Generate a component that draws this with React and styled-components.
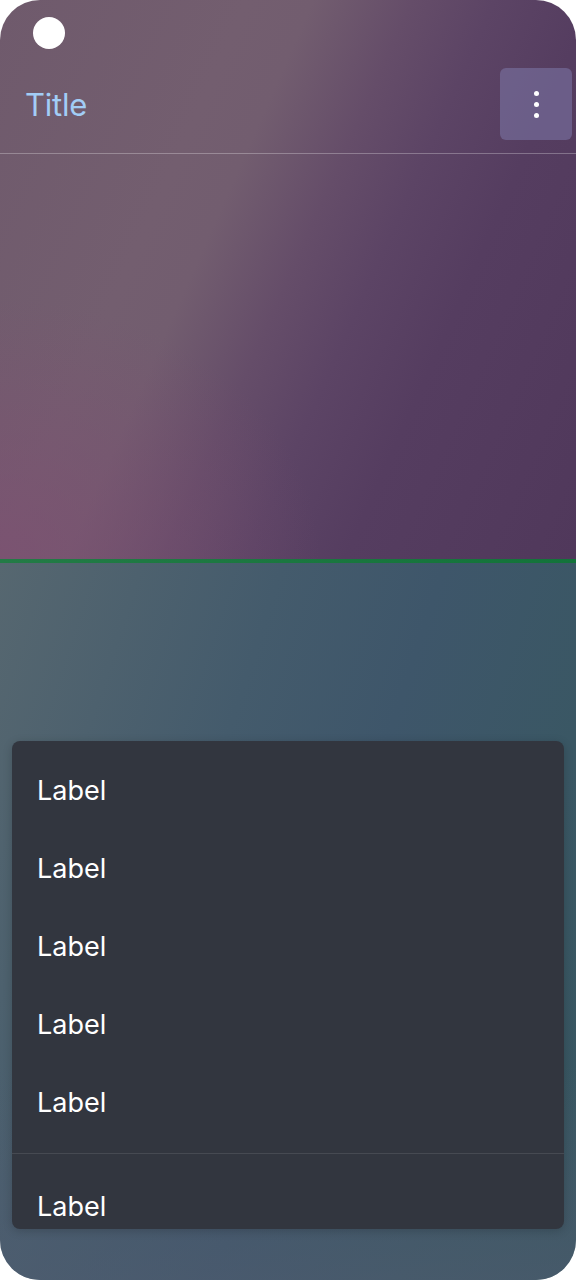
import React from "react";
import styled, { createGlobalStyle } from "styled-components";

const GlobalStyle = createGlobalStyle`
  html, body {
    margin: 0;
    padding: 0;
    background: #ffffff;
    font-family: Inter, "Noto Sans", sans-serif;
  }
`;

const Frame = styled.div`
  width: 576px;
  height: 1280px;
  border-radius: 40px;
  overflow: hidden;
  display: flex;
  flex-direction: column;
`;

const TopPane = styled.section`
  height: 559px;
  background:
    radial-gradient(ellipse 320px 260px at 0% 100%, rgba(126, 78, 114, 0.7), rgba(126, 78, 114, 0) 100%),
    linear-gradient(114deg, #6f5a6c 0%, #735e6f 30%, #725d6f 38%, #654d69 50%, #5c4465 60%, #553d60 72%, #50385b 100%);
`;

const Header = styled.header`
  padding: 17px 4px 13px 25px;
  border-bottom: 1px solid rgba(255, 255, 255, 0.28);
`;

const StatusRow = styled.div`
  height: 32px;
  display: flex;
  align-items: center;
  padding-left: 8px;
`;

const Camera = styled.span`
  width: 32px;
  height: 32px;
  border-radius: 50%;
  background: #ffffff;
`;

const AppBar = styled.div`
  margin-top: 19px;
  height: 72px;
  display: flex;
  align-items: center;
  justify-content: space-between;
`;

const Title = styled.h1`
  margin: 0;
  font-size: 31px;
  font-weight: 400;
  color: #a2cdf6;
  letter-spacing: -0.2px;
`;

const MenuButton = styled.button`
  width: 72px;
  height: 72px;
  border: none;
  border-radius: 6px;
  background: rgba(125, 120, 170, 0.55);
  display: flex;
  flex-direction: column;
  align-items: center;
  justify-content: center;
  gap: 6px;
  padding: 0;
`;

const Dot = styled.span`
  width: 5px;
  height: 5px;
  border-radius: 50%;
  background: #ffffff;
`;

const GreenRule = styled.div`
  height: 4px;
  background: linear-gradient(90deg, #237b46, #13733a);
`;

const BottomPane = styled.section`
  flex: 1;
  padding: 178px 12px 0;
  background:
    linear-gradient(180deg, rgba(0, 0, 0, 0) 70%, rgba(80, 92, 112, 0.6) 100%),
    linear-gradient(108deg, #566770 0%, #445b6c 35%, #3e566a 55%, #3a5764 78%, #375660 100%);
`;

const Menu = styled.div`
  height: 488px;
  overflow: hidden;
  background: #32363f;
  border-radius: 8px;
  box-shadow: 0 2px 10px rgba(0, 0, 0, 0.18);
  padding-top: 10px;
  box-sizing: border-box;
`;

const Item = styled.div`
  height: 78px;
  display: flex;
  align-items: center;
  padding-left: 25px;
  font-size: 27px;
  color: #ffffff;
`;

const Separator = styled.hr`
  margin: 12px 0 13px;
  border: none;
  height: 1px;
  background: rgba(255, 255, 255, 0.1);
`;

const labels = ["Label", "Label", "Label", "Label", "Label"];

export default function App() {
  return (
    <>
      <GlobalStyle />
      <Frame>
        <TopPane>
          <Header>
            <StatusRow>
              <Camera />
            </StatusRow>
            <AppBar>
              <Title>Title</Title>
              <MenuButton aria-label="More">
                <Dot />
                <Dot />
                <Dot />
              </MenuButton>
            </AppBar>
          </Header>
        </TopPane>
        <GreenRule />
        <BottomPane>
          <Menu>
            {labels.map((l, i) => (
              <Item key={i}>{l}</Item>
            ))}
            <Separator />
            <Item>Label</Item>
          </Menu>
        </BottomPane>
      </Frame>
    </>
  );
}
